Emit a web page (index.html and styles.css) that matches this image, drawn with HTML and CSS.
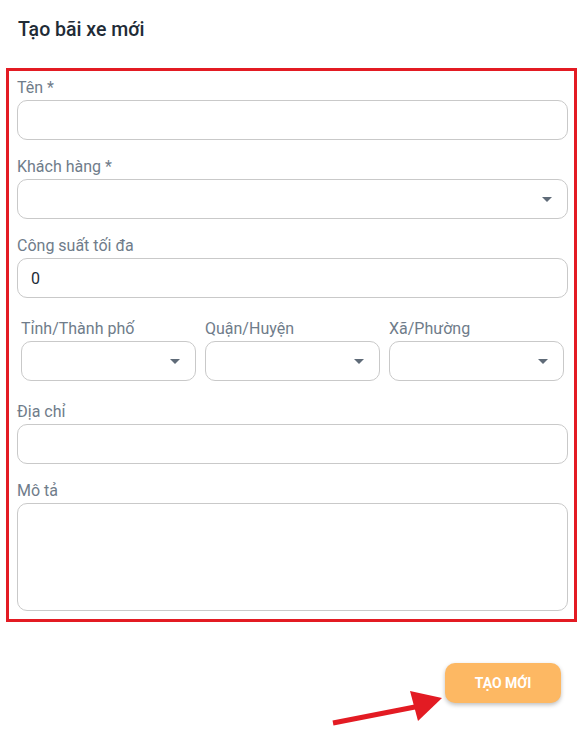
FILE: index.html
```html
<!DOCTYPE html>
<html lang="vi">
  <head>
    <meta charset="UTF-8" />
    <meta name="viewport" content="width=device-width, initial-scale=1.0" />
    <title>Tạo bãi xe mới</title>
    <link rel="stylesheet" href="styles.css">
  </head>
  <body>
    <div class="page">
      <h2 class="title">Tạo bãi xe mới</h2>

      <div class="form-box">
        <div class="field">
          <label class="label">Tên *</label>
          <input class="control" type="text" />
        </div>

        <div class="field">
          <label class="label">Khách hàng *</label>
          <div class="select">
            <span class="caret"></span>
          </div>
        </div>

        <div class="field">
          <label class="label">Công suất tối đa</label>
          <input class="control" type="text" value="0" />
        </div>

        <div class="field-row">
          <div>
            <label class="label">Tỉnh/Thành phố</label>
            <div class="select"><span class="caret"></span></div>
          </div>
          <div>
            <label class="label">Quận/Huyện</label>
            <div class="select"><span class="caret"></span></div>
          </div>
          <div>
            <label class="label">Xã/Phường</label>
            <div class="select"><span class="caret"></span></div>
          </div>
        </div>

        <div class="field">
          <label class="label">Địa chỉ</label>
          <input class="control" type="text" />
        </div>

        <div class="field last">
          <label class="label">Mô tả</label>
          <textarea class="control textarea"></textarea>
        </div>
      </div>

      <div class="actions">
        <button class="submit-btn">TẠO MỚI</button>
      </div>

      <!-- annotation arrow pointing at the button -->
      <svg class="pointer" viewBox="328 670 118 44" width="118" height="44">
        <line x1="333" y1="707" x2="420" y2="690" stroke="#e31b23" stroke-width="5" />
        <polygon points="442,682 410,675 418,705" fill="#e31b23" />
      </svg>
    </div>
  </body>
</html>
```

FILE: styles.css
```css
* {
  margin: 0;
  padding: 0;
  box-sizing: border-box;
}

body {
  font-family: "Roboto", "Liberation Sans", sans-serif;
  background: #ffffff;
  color: #212b36;
}

.page {
  position: relative;
  width: 588px;
  min-height: 730px;
}

.title {
  font-size: 19.5px;
  font-weight: 500;
  line-height: 28px;
  color: #212b36;
  margin: 16px 0 24px 18px;
}

.form-box {
  margin-left: 6px;
  width: 571px;
  border: 3px solid #e31b23;
  padding: 7px 6px 8px 8px;
}

.field {
  margin-bottom: 17px;
}

.field.last {
  margin-bottom: 0;
}

.label {
  display: block;
  font-size: 16px;
  line-height: 20px;
  color: #6f7c8a;
  margin-bottom: 2px;
}

.control {
  display: block;
  width: 100%;
  height: 40px;
  border: 1px solid #c9c9c9;
  border-radius: 10px;
  padding: 0 13px;
  font-family: "Roboto", "Liberation Sans", sans-serif;
  font-size: 16px;
  color: #212b36;
  background: #ffffff;
  outline: none;
}

.textarea {
  height: 108px;
  resize: none;
  padding: 10px 13px;
}

.select {
  position: relative;
  height: 40px;
  border: 1px solid #c9c9c9;
  border-radius: 10px;
  background: #ffffff;
}

.caret {
  position: absolute;
  right: 15px;
  top: 17px;
  width: 0;
  height: 0;
  border-left: 5px solid transparent;
  border-right: 5px solid transparent;
  border-top: 5px solid #5f6b78;
}

.field-row {
  display: grid;
  grid-template-columns: 1fr 1fr 1fr;
  gap: 9px;
  padding: 4px 4px 4px;
  margin-bottom: 17px;
}

.actions {
  display: flex;
  justify-content: flex-end;
  padding-right: 27px;
  margin-top: 41px;
}

.submit-btn {
  width: 116px;
  height: 40px;
  border: none;
  border-radius: 10px;
  background: #fdb863;
  color: #ffffff;
  font-family: "Roboto", "Liberation Sans", sans-serif;
  font-size: 14px;
  font-weight: 700;
  cursor: pointer;
  box-shadow: 0 2px 4px rgba(0, 0, 0, 0.25);
}

.pointer {
  position: absolute;
  left: 328px;
  top: 670px;
}
```
